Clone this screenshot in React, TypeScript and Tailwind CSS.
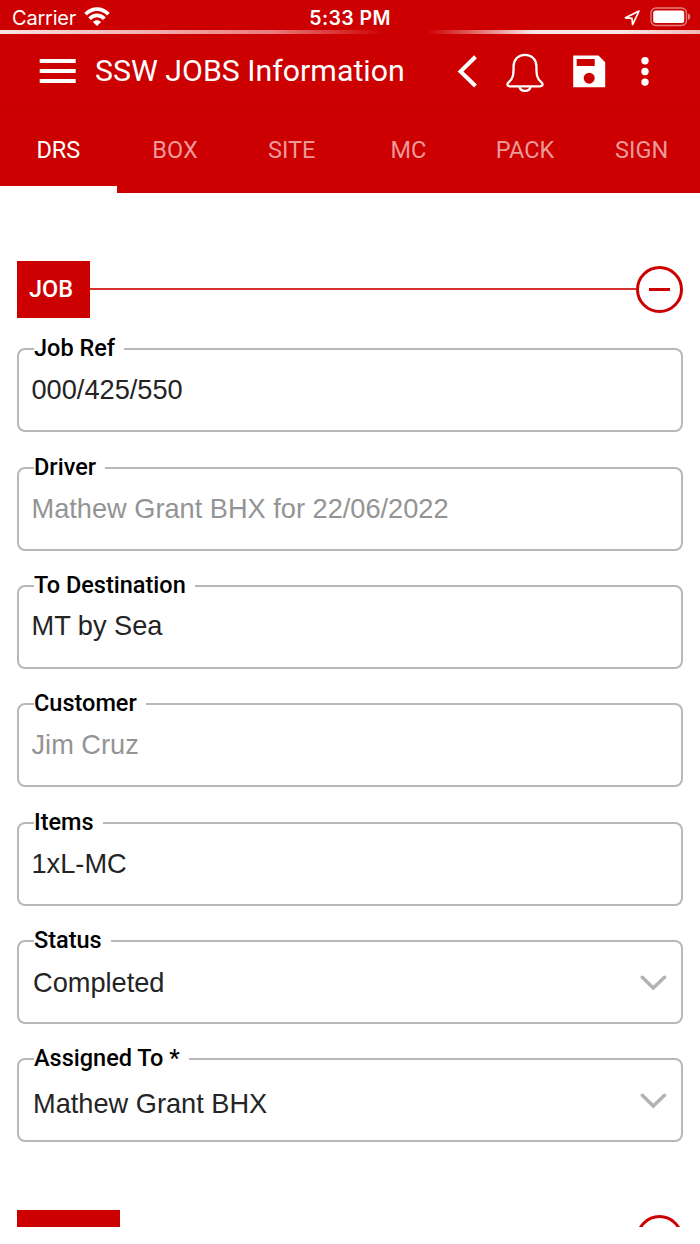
import React from "react";

type Field = { label: string; value: string; muted?: boolean; select?: boolean; pad: string };

const fields: Field[] = [
  { label: "Job Ref", value: "000/425/550", pad: "pl-[12.5px] pt-[24px]" },
  { label: "Driver", value: "Mathew Grant BHX for 22/06/2022", muted: true, pad: "pl-[12.5px] pt-[24px]" },
  { label: "To Destination", value: "MT by Sea", pad: "pl-[12.5px] pt-[23px]" },
  { label: "Customer", value: "Jim Cruz", muted: true, pad: "pl-[12.5px] pt-[23.5px]" },
  { label: "Items", value: "1xL-MC", pad: "pl-[12.5px] pt-[24px]" },
  { label: "Status", value: "Completed", select: true, pad: "pl-[14px] pt-[25px]" },
  { label: "Assigned To *", value: "Mathew Grant BHX", select: true, pad: "pl-[14px] pt-[27.6px]" },
];

const tabs = ["DRS", "BOX", "SITE", "MC", "PACK", "SIGN"];

function StatusBar() {
  return (
    <div className="flex h-[30px] items-center pt-[6px] font-['Inter',sans-serif] text-[20px] leading-[24px]">
      <div className="flex flex-1 items-center pl-[12px]">
        <span className="w-[72px] whitespace-nowrap tracking-[-0.2px]">Carrier</span>
        <svg className="-mt-[3px]" width="26" height="20" viewBox="0 0 26 20" fill="none" stroke="#fff">
          <path d="M1.6 7.3C8 .4 18 .4 24.4 7.3" strokeWidth="3.7" />
          <path d="M5.6 11.7c4.2-4.4 10.600-4.400 14.800 0" strokeWidth="3.7" />
          <path d="M8.9 14.9c2.400-2.200 5.800-2.200 8.200 0L13 19Z" fill="#fff" stroke="none" />
        </svg>
      </div>
      <span className="-translate-x-[1.5px] whitespace-nowrap text-[19.5px] font-semibold tracking-[0.4px]">5:33 PM</span>
      <div className="flex flex-1 items-center justify-end gap-[9px] pr-[9px]">
        <svg className="-mt-[1px]" width="17" height="17" viewBox="0 0 17 17" fill="none" stroke="#fff" strokeWidth="1.7" strokeLinejoin="round">
          <path d="M15 2 1.5 8.8l6.500.6.600 6.200Z" />
        </svg>
        <svg className="-mt-[2px]" width="41" height="20" viewBox="0 0 41 20">
          <rect x="1" y="1" width="35.5" height="17.5" rx="5" fill="none" stroke="#fff" strokeOpacity=".5" strokeWidth="1.3" />
          <rect x="3.2" y="3.5" width="31" height="12.5" rx="2.5" fill="#fff" />
          <path d="M38 6.500q2.300.6 2.300 3.200T38 13Z" fill="#fff" fillOpacity=".5" />
        </svg>
      </div>
    </div>
  );
}

function TitleBar() {
  return (
    <div className="flex h-[74px] items-center pl-[39px]">
      <svg className="shrink-0" width="37" height="26" viewBox="0 0 37 26" fill="#fff">
        <path d="M.7 1h36v4H.7ZM.7 11h36v4H.7ZM.7 21h36v4H.7Z" />
      </svg>
      <h1 className="ml-[19px] w-[360px] whitespace-nowrap text-[30.3px] leading-[38px]">SSW JOBS Information</h1>
      <svg className="shrink-0" width="24" height="36" viewBox="0 0 24 36" fill="none" stroke="#fff" strokeWidth="4">
        <path d="M20.500 3.800 5.500 18.500 20.500 33" />
      </svg>
      <svg className="ml-[27px] mt-[3px] shrink-0" width="38" height="40" viewBox="0 0 38 40" fill="none" stroke="#fff" strokeWidth="2.3" strokeLinejoin="round">
        <path d="M19 1.800C12.300 1.800 7.600 6.600 7.600 13.200c0 9-.6 12.300-4.800 16-2.200 2-1.600 4.100 1 4.100h30.400c2.600 0 3.200-2.100 1-4.100-4.200-3.700-4.800-7-4.800-16C30.400 6.600 25.700 1.800 19 1.800Z" />
        <path d="M13.500 33.500c.7 5.800 10.300 5.800 11 0" />
      </svg>
      <svg className="ml-[29px] mt-[1px] shrink-0" width="33" height="33" viewBox="0 0 33 33">
        <path fill="#fff" fillRule="evenodd" d="M.2.400H25.500L32.200 7.200V32.300H.2ZM3.700 4V11h18V4ZM16.200 17.700a5.500 5.500 0 1 0 0 11 5.500 5.500 0 0 0 0-11Z" />
      </svg>
      <svg className="ml-[35px] mt-[1px] shrink-0" width="9" height="30" viewBox="0 0 9 30" fill="#fff">
        <circle cx="4" cy="3.8" r="3.7" />
        <circle cx="4" cy="14.500" r="3.7" />
        <circle cx="4" cy="25.100" r="3.7" />
      </svg>
    </div>
  );
}

function TextField({ label, value, muted, select, pad }: Field) {
  return (
    <div className="relative mb-[34.3px] flex h-[84px] shrink-0 justify-between rounded-[8px] border-2 border-[#b8b8b8]">
      <label className="absolute -top-[15px] left-[15px] whitespace-pre bg-white pr-[9px] text-[23.5px] font-medium leading-[26px] text-black">{label}</label>
      <span className={`${pad} whitespace-nowrap font-['Liberation_Sans',Arial,sans-serif] text-[27.2px] leading-[32px] ${muted ? "text-[#949494]" : "text-[#242424]"}`}>{value}</span>
      {select && (
        <svg className="mr-[14px] mt-[33px]" width="27" height="17" viewBox="0 0 27 17" fill="none" stroke="#b3b3b3" strokeWidth="3.5" strokeLinecap="round">
          <path d="m2.300 2.300 11 10.800L24.500 2.300" />
        </svg>
      )}
    </div>
  );
}

export default function App() {
  return (
    <div className="flex h-[1244px] w-[700px] flex-col overflow-hidden bg-white font-['Roboto',sans-serif]">
      <header className="flex h-[192.5px] shrink-0 flex-col bg-[#cc0000] text-white">
        <StatusBar />
        <div className="h-[4px] bg-[linear-gradient(90deg,#ffffff_0%,#f7c0c0_22%,#ec8989_39%,#cc0000_55%,#cc0000_61%,#ffffff_76%,#ffffff_89%,#f6cccc_100%)] opacity-90" />
        <TitleBar />
        <div className="h-px bg-[#bf0000]" />
        <nav className="grid flex-1 grid-cols-6 text-[23.5px]">
          {tabs.map((tab, i) => (
            <div key={tab} className={`flex flex-col items-center ${i === 0 ? "text-white" : "text-[#ee9999]"}`}>
              <span className="flex-1 pt-[27.4px] leading-[28px]">{tab}</span>
              {i === 0 && <span className="h-[6.5px] w-full bg-white" />}
            </div>
          ))}
        </nav>
      </header>
      <main className="flex h-[1034.5px] shrink-0 flex-col overflow-hidden px-[17px] pt-[68px]">
        <div className="mb-[30.4px] flex h-[57.5px] shrink-0 items-center">
          <h2 className="flex h-full w-[73px] items-center justify-center bg-[#cc0000] pr-[5px] text-[23.5px] font-medium text-white">JOB</h2>
          <div className="h-[2px] flex-1 bg-[#cc0000]/80" />
          <button aria-label="Collapse" className="flex size-[47px] items-center justify-center rounded-full border-[3px] border-[#cc0000]">
            <span className="h-[3px] w-[21px] bg-[#cc0000]" />
          </button>
        </div>
        {fields.map((field) => (
          <TextField key={field.label} {...field} />
        ))}
        <div className="mt-[33.5px] flex h-[58px] shrink-0 justify-between">
          <div className="h-full w-[103px] bg-[#cc0000]" />
          <div className="mt-[5px] size-[47px] rounded-full border-[3px] border-[#cc0000]" />
        </div>
      </main>
    </div>
  );
}
